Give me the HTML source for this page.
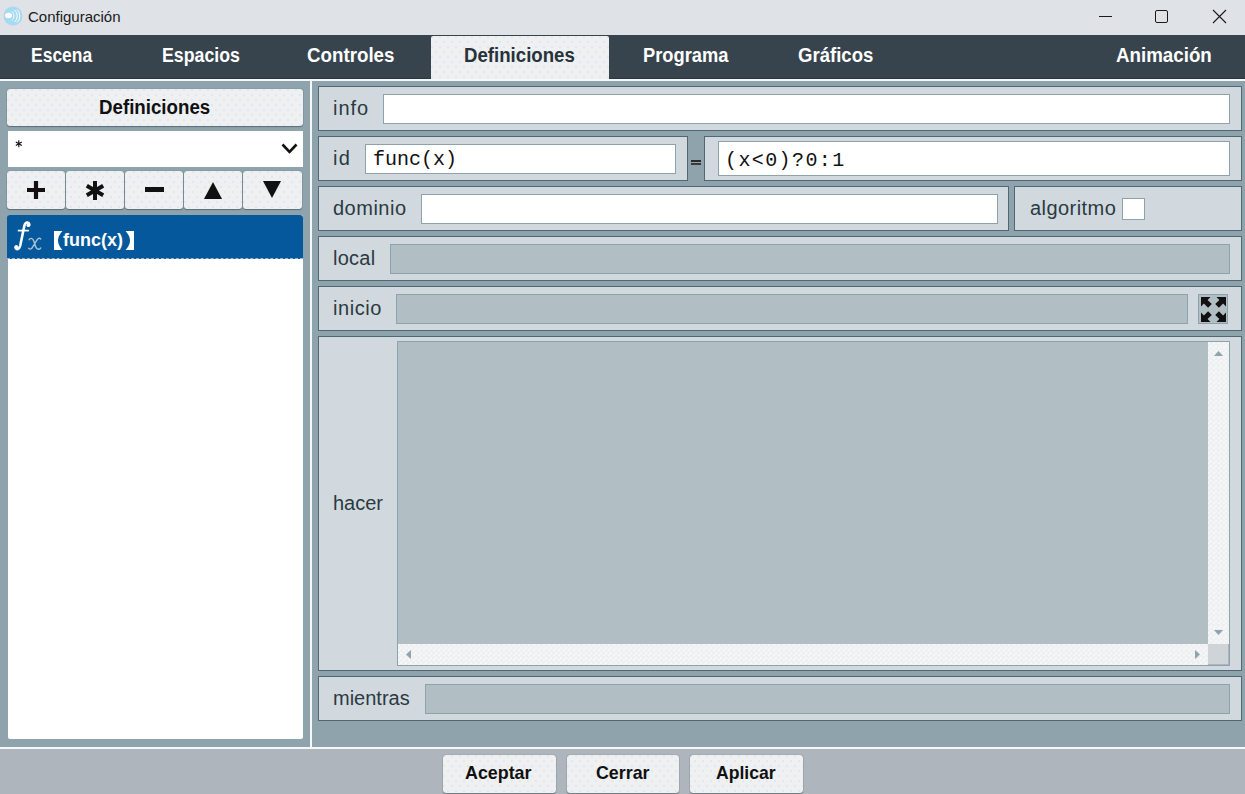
<!DOCTYPE html>
<html><head><meta charset="utf-8">
<style>
*{box-sizing:border-box;margin:0;padding:0}
html,body{width:1245px;height:794px;overflow:hidden;background:#8fa3ac;font-family:"Liberation Sans",sans-serif}
.a{position:absolute}
.t{position:absolute;white-space:nowrap;line-height:1;transform-origin:0 0}
.dots{background-color:#eef0f2;background-image:radial-gradient(circle at 1px 1px,#dfe2e6 0.6px,transparent 0.9px),radial-gradient(circle at 1px 1px,#dfe2e6 0.6px,transparent 0.9px);background-size:8px 10px,8px 10px;background-position:0 0,4px 5px}
.sdots{background-color:#eef0f2;background-image:radial-gradient(circle at 1px 1px,#fafbfc 0.6px,transparent 0.9px),radial-gradient(circle at 1px 1px,#fafbfc 0.6px,transparent 0.9px);background-size:5px 5px,5px 5px;background-position:0 0,2px 3px}
.btn{position:absolute;border-radius:3px;box-shadow:0 1px 1px rgba(50,70,80,.5),0 0 1px rgba(50,70,80,.7)}
.row{position:absolute;background:#d1d9de;border:1px solid #4f6873}
.inp{position:absolute;background:#fff;border:1px solid #8ea2ab}
.dis{position:absolute;background:#b1bec4;border:1px solid #8ea2ab}
.lbl{font-size:20px;color:#2b3942}
.tab{font-size:20px;font-weight:bold;color:#fff}
.bt{font-size:18.5px;font-weight:bold;color:#111}
.mono{font-family:"Liberation Mono",monospace;font-size:20px;color:#111}
</style></head><body>
<!-- title bar -->
<div class="a" style="left:0;top:0;width:1245px;height:35px;background:#dfe2e7"></div>
<svg class="a" style="left:2px;top:5px" width="22" height="22" viewBox="0 0 22 22">
  <circle cx="11" cy="11" r="9.5" fill="#a6d9f2"/>
  <ellipse cx="6.5" cy="10.5" rx="3.5" ry="2.8" fill="#fff"/>
  <path d="M10 6.5 A6 6 0 0 1 10 15.5 M12.5 5 A8 8 0 0 1 12.5 17 M15 4.5 A9 9 0 0 1 15 17.5" stroke="#fff" stroke-width="1" fill="none" opacity=".9"/>
</svg>
<div class="t" style="left:28px;top:9px;font-size:15px;color:#1a1a1a">Configuración</div>
<div class="a" style="left:1099px;top:16px;width:13px;height:1px;background:#1a1a1a"></div>
<div class="a" style="left:1155px;top:10px;width:13px;height:13px;border:1px solid #1a1a1a;border-radius:2px"></div>
<svg class="a" style="left:1212px;top:9px" width="15" height="15" viewBox="0 0 15 15"><path d="M1 1L14 14M14 1L1 14" stroke="#1a1a1a" stroke-width="1.1"/></svg>

<!-- tab bar -->
<div class="a" style="left:0;top:35px;width:1245px;height:44px;background:#37444d"></div>
<div class="a" style="left:0;top:78px;width:1245px;height:1px;background:#2a3740"></div>
<div class="a dots" style="left:431px;top:36px;width:178px;height:44px;border-radius:2px 2px 0 0"></div>
<div class="a" style="left:0;top:79px;width:1245px;height:2px;background:#f6f7f8"></div>
<div class="t tab" style="left:31px;top:44.6px;transform:scaleX(.874)">Escena</div>
<div class="t tab" style="left:162px;top:44.6px;transform:scaleX(.887)">Espacios</div>
<div class="t tab" style="left:307px;top:44.6px;transform:scaleX(.937)">Controles</div>
<div class="t tab" style="left:464px;top:44.6px;transform:scaleX(.932);color:#26333b">Definiciones</div>
<div class="t tab" style="left:643px;top:44.6px;transform:scaleX(.914)">Programa</div>
<div class="t tab" style="left:798px;top:44.6px;transform:scaleX(.929)">Gráficos</div>
<div class="t tab" style="left:1116px;top:44.6px;transform:scaleX(.937)">Animación</div>

<div class="a" style="left:310px;top:81px;width:2px;height:667px;background:#f6f7f8"></div>

<!-- left panel -->
<div class="btn dots" style="left:7px;top:89px;width:296px;height:37px"></div>
<div class="t bt" style="left:99px;top:97px;font-size:20px;transform:scaleX(.935)">Definiciones</div>
<div class="a" style="left:8px;top:131px;width:295px;height:36px;background:#fff"></div>
<svg class="a" style="left:15px;top:140px" width="8" height="8" viewBox="0 0 8 8"><path d="M3.8 0.2V7.2M0.8 1.9L6.8 5.4M0.8 5.4L6.8 1.9" stroke="#111" stroke-width="1.1"/></svg>
<svg class="a" style="left:281px;top:142px" width="17" height="13" viewBox="0 0 17 13"><path d="M1.5 2.5 L8.5 9.8 L15.5 2.5" stroke="#111" stroke-width="2.6" fill="none"/></svg>

<div class="btn dots" style="left:7px;top:171px;width:58px;height:38px"></div>
<div class="btn dots" style="left:66px;top:171px;width:58px;height:38px"></div>
<div class="btn dots" style="left:125px;top:171px;width:58px;height:38px"></div>
<div class="btn dots" style="left:184px;top:171px;width:58px;height:38px"></div>
<div class="btn dots" style="left:243px;top:171px;width:59px;height:38px"></div>
<svg class="a" style="left:27px;top:181px" width="18" height="18" viewBox="0 0 18 18"><path d="M9 0V18M0 9H18" stroke="#140d12" stroke-width="4.2"/></svg>
<svg class="a" style="left:85px;top:181px" width="20" height="19" viewBox="0 0 20 19"><path d="M10 0V19M1.8 4.75L18.2 14.25M1.8 14.25L18.2 4.75" stroke="#111" stroke-width="4"/></svg>
<div class="a" style="left:145px;top:187px;width:19px;height:5px;background:#111"></div>
<svg class="a" style="left:204px;top:182px" width="18" height="18" viewBox="0 0 18 18"><path d="M9 0L18 17H0Z" fill="#111"/></svg>
<svg class="a" style="left:263px;top:181px" width="18" height="18" viewBox="0 0 18 18"><path d="M0 0H18L9 17Z" fill="#111"/></svg>

<div class="a" style="left:8px;top:215px;width:295px;height:524px;background:#fff;border-radius:2px"></div>
<div class="a" style="left:7px;top:215px;width:296px;height:44px;background:#04589b;border-radius:3px 3px 0 0"></div>
<div class="a" style="left:7px;top:258px;width:296px;height:1px;border-top:1px dashed #9ab7d0"></div>
<svg class="a" style="left:8px;top:216px" width="44" height="40" viewBox="0 0 44 40">
 <path d="M21.3 8.6C20.8 5.8 17.6 5.6 16.4 9.6L12.2 29.8C11.3 33.6 8.2 34 7.6 31.6" stroke="#fff" stroke-width="2.6" fill="none" stroke-linecap="round"/>
 <circle cx="20.4" cy="9.2" r="1.9" fill="#fff"/><circle cx="8.3" cy="31" r="1.9" fill="#fff"/>
 <path d="M9.8 14.6H20.9" stroke="#fff" stroke-width="1.7"/>
 <path d="M20.8 24.2C21.8 21.8 24.6 21.6 25.6 24.4L27.8 31C28.8 34 32 34 33 31.4M33 23.6C32.3 21.6 30.4 22 29.2 23.6L24.4 31.4C23.4 33.6 21 33.6 20.4 31.8" stroke="#a8c2d6" stroke-width="1.4" fill="none"/>
</svg>
<svg class="a" style="left:54px;top:231px" width="9" height="19" viewBox="0 0 9 19"><path d="M0 0H8.5Q-0.5 9.5 8.5 19H0Z" fill="#fff"/></svg>
<div class="t" style="left:63px;top:231px;font-size:18px;font-weight:bold;color:#fff">func(x)</div>
<svg class="a" style="left:125px;top:231px" width="9" height="19" viewBox="0 0 9 19"><path d="M9 0H0.5Q9.5 9.5 0.5 19H9Z" fill="#fff"/></svg>

<!-- right rows -->
<div class="row" style="left:318px;top:86px;width:924px;height:45px"></div>
<div class="inp" style="left:383px;top:94px;width:847px;height:30px"></div>
<div class="t lbl" style="left:333px;top:98px;letter-spacing:1px">info</div>

<div class="row" style="left:318px;top:136px;width:370px;height:45px"></div>
<div class="inp" style="left:365px;top:144px;width:311px;height:30px"></div>
<div class="t lbl" style="left:333px;top:148px;letter-spacing:1.2px">id</div>
<div class="t mono" style="left:373px;top:150px">func(x)</div>
<div class="a" style="left:691px;top:160px;width:10px;height:5px;border-top:2px solid #2a2a2a;border-bottom:2px solid #3a3a3a"></div>
<div class="row" style="left:704px;top:136px;width:538px;height:45px"></div>
<div class="inp" style="left:718px;top:141px;width:512px;height:35px"></div>
<div class="t mono" style="left:725px;top:151px;letter-spacing:1.4px">(x&lt;0)?0:1</div>

<div class="row" style="left:318px;top:186px;width:691px;height:45px"></div>
<div class="inp" style="left:421px;top:194px;width:577px;height:30px"></div>
<div class="t lbl" style="left:333px;top:198px;letter-spacing:.5px">dominio</div>
<div class="row" style="left:1014px;top:186px;width:228px;height:45px"></div>
<div class="t lbl" style="left:1030px;top:198px;letter-spacing:.45px">algoritmo</div>
<div class="inp" style="left:1122px;top:198px;width:23px;height:22px"></div>

<div class="row" style="left:318px;top:236px;width:924px;height:45px"></div>
<div class="dis" style="left:390px;top:244px;width:840px;height:30px"></div>
<div class="t lbl" style="left:333px;top:248px;letter-spacing:.25px">local</div>

<div class="row" style="left:318px;top:286px;width:924px;height:45px"></div>
<div class="dis" style="left:396px;top:294px;width:792px;height:30px"></div>
<div class="t lbl" style="left:333px;top:298px;letter-spacing:.55px">inicio</div>
<div class="dis" style="left:1198px;top:294px;width:30px;height:30px"></div>
<svg class="a" style="left:1201px;top:297px" width="25" height="25" viewBox="0 0 25 25">
 <g fill="#111">
  <path d="M0 0H9.5L6.6 2.9L10.8 7.1L7.1 10.8L2.9 6.6L0 9.5Z"/>
  <path d="M25 0H15.5L18.4 2.9L14.2 7.1L17.9 10.8L22.1 6.6L25 9.5Z"/>
  <path d="M0 25H9.5L6.6 22.1L10.8 17.9L7.1 14.2L2.9 18.4L0 15.5Z"/>
  <path d="M25 25H15.5L18.4 22.1L14.2 17.9L17.9 14.2L22.1 18.4L25 15.5Z"/>
 </g>
</svg>

<div class="row" style="left:318px;top:336px;width:924px;height:335px"></div>
<div class="dis" style="left:397px;top:341px;width:833px;height:325px"></div>
<div class="a sdots" style="left:1208px;top:342px;width:21px;height:302px"></div>
<div class="a sdots" style="left:398px;top:644px;width:810px;height:21px"></div>
<div class="a" style="left:1208px;top:644px;width:21px;height:21px;background:#cfd4d8;box-shadow:inset -1px -1px 0 #aab6bc"></div>
<svg class="a" style="left:1214px;top:351px" width="9" height="5" viewBox="0 0 9 5"><path d="M4.5 0L9 5H0Z" fill="#8fa3ac"/></svg>
<svg class="a" style="left:1214px;top:630px" width="9" height="5" viewBox="0 0 9 5"><path d="M0 0H9L4.5 5Z" fill="#8fa3ac"/></svg>
<svg class="a" style="left:406px;top:650px" width="5" height="9" viewBox="0 0 5 9"><path d="M5 0V9L0 4.5Z" fill="#8fa3ac"/></svg>
<svg class="a" style="left:1195px;top:650px" width="5" height="9" viewBox="0 0 5 9"><path d="M0 0V9L5 4.5Z" fill="#8fa3ac"/></svg>
<div class="t lbl" style="left:333px;top:493px">hacer</div>

<div class="row" style="left:318px;top:676px;width:924px;height:45px"></div>
<div class="dis" style="left:425px;top:684px;width:805px;height:30px"></div>
<div class="t lbl" style="left:333px;top:688px">mientras</div>

<!-- bottom -->
<div class="a" style="left:0;top:747px;width:1245px;height:2px;background:#f6f7f8"></div>
<div class="a" style="left:0;top:749px;width:1245px;height:45px;background:#afb5bc"></div>
<div class="btn dots" style="left:443px;top:755px;width:113px;height:38px"></div>
<div class="btn dots" style="left:567px;top:755px;width:112px;height:38px"></div>
<div class="btn dots" style="left:690px;top:755px;width:113px;height:38px"></div>
<div class="t bt" style="left:465px;top:764px;transform:scaleX(.965)">Aceptar</div>
<div class="t bt" style="left:596px;top:764px;transform:scaleX(.963)">Cerrar</div>
<div class="t bt" style="left:716px;top:764px;transform:scaleX(.95)">Aplicar</div>
</body></html>
